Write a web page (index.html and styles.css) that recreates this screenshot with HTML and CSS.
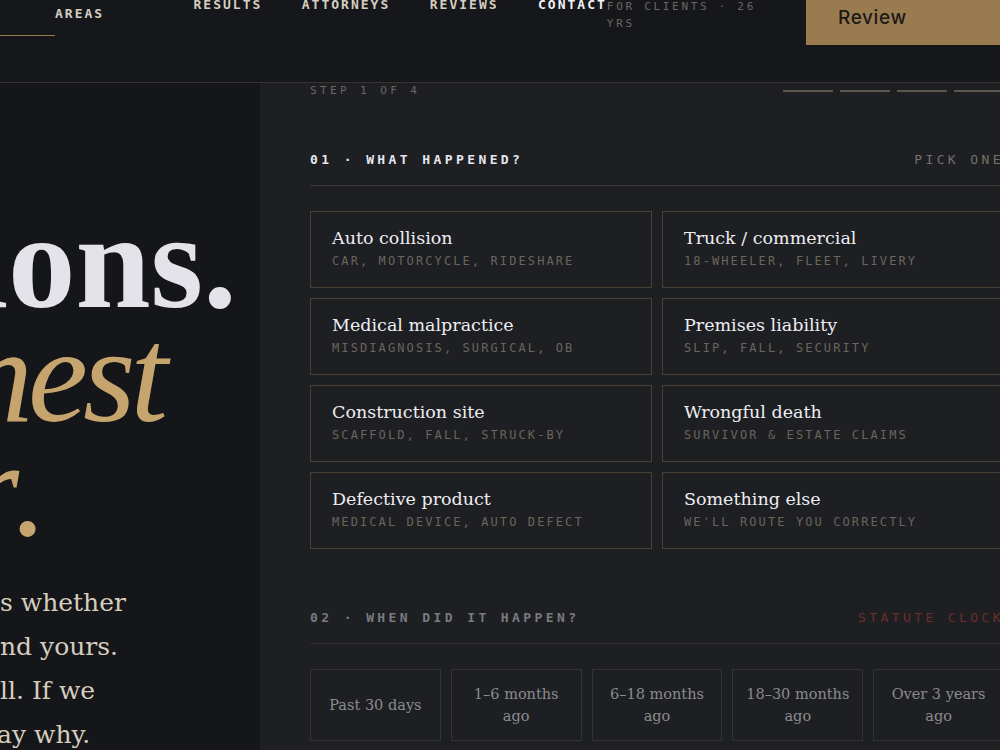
FILE: index.html
```html
<!DOCTYPE html>
<html lang="en">
<head>
<meta charset="utf-8">
<title>Case review</title>
<link rel="stylesheet" href="styles.css">
</head>
<body>
<div class="page">
  <header class="topbar">
    <div class="brand"></div>
    <nav class="nav">
      <a class="nav-item wide">PRACTICE AREAS</a>
      <a class="nav-item">RESULTS</a>
      <a class="nav-item">ATTORNEYS</a>
      <a class="nav-item">REVIEWS</a>
      <a class="nav-item active">CONTACT</a>
    </nav>
    <div class="tag">FOR CLIENTS · 26 YRS</div>
    <a class="cta">Review</a>
  </header>

  <main class="main">
    <section class="hero">
      <h1 class="hl">
        <span class="line l1"><span class="pre">Real questi</span>ons.</span>
        <span class="line l2 it"><span class="pre">Hon</span>est</span>
        <span class="line l3 it"><span class="pre">answer</span>.</span>
      </h1>
      <p class="lede">
        <span class="line"><span class="pre">One short review tell</span>s whether</span>
        <span class="line"><span class="pre">your claim is sound — a</span>nd yours.</span>
        <span class="line"><span class="pre">No fee if we lose. None at a</span>ll. If we</span>
        <span class="line l4"><span class="pre">can't help, we'll sa</span>y why.</span>
      </p>
    </section>

    <section class="panel">
      <div class="step-row">
        <span>STEP 1 OF 4</span>
        <div class="dashes"><span></span><span></span><span></span><span></span></div>
      </div>

      <div class="qhead">
        <span class="qtitle">01 · WHAT HAPPENED?</span>
        <span class="qhint">PICK ONE</span>
      </div>

      <div class="cards">
        <div class="card"><div class="card-title">Auto collision</div><div class="card-sub">CAR, MOTORCYCLE, RIDESHARE</div></div>
        <div class="card"><div class="card-title">Truck / commercial</div><div class="card-sub">18-WHEELER, FLEET, LIVERY</div></div>
        <div class="card"><div class="card-title">Medical malpractice</div><div class="card-sub">MISDIAGNOSIS, SURGICAL, OB</div></div>
        <div class="card"><div class="card-title">Premises liability</div><div class="card-sub">SLIP, FALL, SECURITY</div></div>
        <div class="card"><div class="card-title">Construction site</div><div class="card-sub">SCAFFOLD, FALL, STRUCK-BY</div></div>
        <div class="card"><div class="card-title">Wrongful death</div><div class="card-sub">SURVIVOR &amp; ESTATE CLAIMS</div></div>
        <div class="card"><div class="card-title">Defective product</div><div class="card-sub">MEDICAL DEVICE, AUTO DEFECT</div></div>
        <div class="card"><div class="card-title">Something else</div><div class="card-sub">WE'LL ROUTE YOU CORRECTLY</div></div>
      </div>

      <div class="qhead q2">
        <span class="qtitle dim">02 · WHEN DID IT HAPPEN?</span>
        <span class="qhint warn">STATUTE CLOCK</span>
      </div>

      <div class="options">
        <div class="opt">Past 30 days</div>
        <div class="opt">1–6 months ago</div>
        <div class="opt">6–18 months ago</div>
        <div class="opt">18–30 months ago</div>
        <div class="opt">Over 3 years ago</div>
      </div>
    </section>
  </main>
</div>
</body>
</html>
```

FILE: styles.css
```css
html, body {
  margin: 0;
  padding: 0;
  overflow: hidden;
  background: #1d1f23;
}

.page {
  width: 1054px;
}

/* ---------- top bar ---------- */
.topbar {
  display: flex;
  align-items: flex-start;
  height: 82px;
  overflow: hidden;
  background: #16171b;
  border-bottom: 1px solid #3a332d;
}

.brand {
  flex: 0 0 55px;
  height: 35px;
  border-bottom: 1px solid #9a7b4f;
}

.nav {
  display: flex;
  align-items: center;
  gap: 39.5px;
  margin-top: -13.5px;
}

.nav-item {
  font: 700 13px/18px "DejaVu Sans Mono", monospace;
  letter-spacing: 2px;
  color: #d5cec1;
  white-space: nowrap;
}

.nav-item.wide {
  width: 99px;
  white-space: normal;
}

.nav-item.active {
  color: #f1f1f3;
}

.tag {
  flex: 0 0 160px;
  margin-top: -2px;
  font: 400 11px/17px "DejaVu Sans Mono", monospace;
  letter-spacing: 2.7px;
  color: #6a6762;
}

.cta {
  margin-left: auto;
  margin-top: -11px;
  flex: 0 0 248px;
  height: 56px;
  box-sizing: border-box;
  padding-left: 32px;
  display: flex;
  align-items: center;
  background: #9a7b4f;
  color: #1b1a17;
  font: 500 19px Inter, "Noto Sans", sans-serif;
  letter-spacing: 0.6px;
}

/* ---------- main ---------- */
.main {
  display: grid;
  grid-template-columns: 260px 1fr;
  height: 667px;
}

.hero {
  background: #151619;
  padding-top: 122px;
  overflow: hidden;
}

.line {
  display: block;
  white-space: nowrap;
}

.pre {
  display: inline-block;
  width: 700px;
  margin-left: -700px;
  text-align: right;
}

.hl {
  margin: 0;
  font: 700 135px/114px "Liberation Serif", serif;
  color: #e4e3e9;
}

.hl .it {
  font-style: italic;
  font-weight: 400;
  color: #c6a46e;
  letter-spacing: -5px;
}

.l1 { padding-left: 8px; }
.l2 { padding-left: 28px; }
.l3 { padding-left: 14px; }
.l4 { padding-left: 12px; }

.lede {
  margin: 34px 0 0;
  font: 400 25px/44px "DejaVu Serif", serif;
  color: #d6cdbf;
}

/* ---------- panel ---------- */
.panel {
  background: #1d1f23;
  padding: 0 50px;
  overflow: hidden;
}

.step-row {
  display: flex;
  justify-content: space-between;
  align-items: center;
  height: 16px;
  font: 400 11px/16px "DejaVu Sans Mono", monospace;
  letter-spacing: 3.4px;
  color: #6b6862;
}

.dashes {
  display: flex;
  gap: 7px;
}

.dashes span {
  width: 50px;
  height: 2px;
  background: #5e564c;
}

.qhead {
  margin-top: 52px;
  display: flex;
  justify-content: space-between;
  padding-bottom: 16px;
  border-bottom: 1px solid #3d3833;
  font: 400 13px/18px "DejaVu Sans Mono", monospace;
  letter-spacing: 3.4px;
  white-space: nowrap;
}

.qtitle {
  font-weight: 700;
  color: #e6e6ee;
}

.qhint {
  color: #76716a;
}

.q2 {
  margin-top: 60px;
  border-bottom-color: #2e2e31;
}

.qtitle.dim {
  color: #7a7a80;
}

.qhint.warn {
  color: #6e2e29;
}

.cards {
  margin-top: 25px;
  display: grid;
  grid-template-columns: 1fr 1fr;
  gap: 10px;
}

.card {
  height: 77px;
  box-sizing: border-box;
  padding: 15px 21px 0;
  border: 1px solid #4a4034;
}

.card-title {
  font: 400 17.5px/22px "DejaVu Serif", serif;
  color: #eeedf2;
  white-space: nowrap;
}

.card-sub {
  margin-top: 4px;
  font: 400 12px/16px "DejaVu Sans Mono", monospace;
  letter-spacing: 2.1px;
  color: #6c655b;
  white-space: nowrap;
}

.options {
  margin-top: 25px;
  display: grid;
  grid-template-columns: repeat(5, 1fr);
  gap: 10px;
}

.opt {
  height: 72px;
  box-sizing: border-box;
  padding: 0 8px;
  border: 1px solid #333336;
  display: flex;
  align-items: center;
  justify-content: center;
  text-align: center;
  font: 400 14.5px/22px "DejaVu Serif", serif;
  color: #8b8b8e;
}
```
